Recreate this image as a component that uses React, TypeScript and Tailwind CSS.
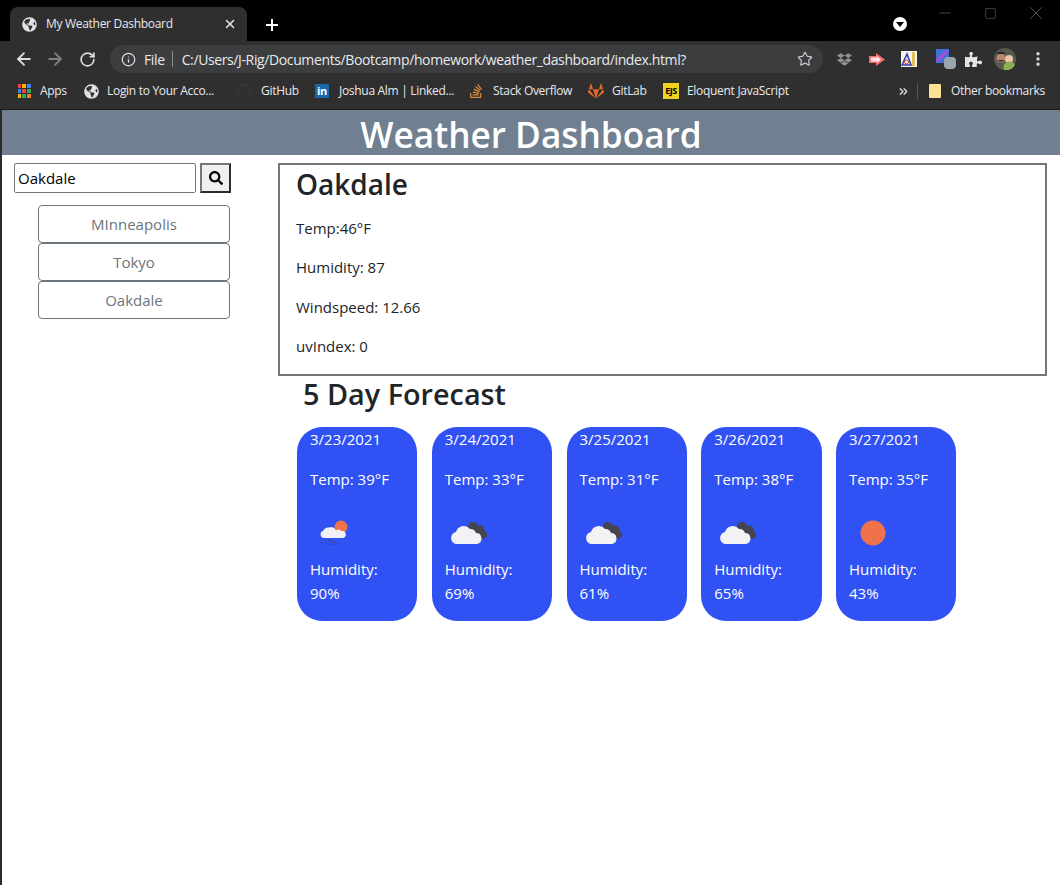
import { ArrowLeft, ArrowRight, ChevronsRight, Info, Minus, MoreVertical, RotateCw, Square, Star, X } from 'lucide-react';
import { FaDropbox, FaGithub, FaGitlab, FaGlobeAmericas, FaPuzzlePiece, FaSearch, FaStackOverflow } from 'react-icons/fa';

const HISTORY = ['MInneapolis', 'Tokyo', 'Oakdale'];

const FORECAST = [
  { date: '3/23/2021', temp: 39, icon: 'rain', humidity: 90 },
  { date: '3/24/2021', temp: 33, icon: 'clouds', humidity: 69 },
  { date: '3/25/2021', temp: 31, icon: 'clouds', humidity: 61 },
  { date: '3/26/2021', temp: 38, icon: 'clouds', humidity: 65 },
  { date: '3/27/2021', temp: 35, icon: 'sun', humidity: 43 },
];

const CURRENT = ['Temp:46°F', 'Humidity: 87', 'Windspeed: 12.66', 'uvIndex: 0'];

function WeatherIcon({ kind }: { kind: string }) {
  return (
    <svg width="50" height="50" viewBox="0 0 50 50">
      {kind === 'sun' && <circle cx="25" cy="25" r="12.5" fill="#f0724a" />}
      {kind === 'clouds' && (
        <g>
          <circle cx="29" cy="19" r="5" fill="#45454f" />
          <circle cx="36" cy="22" r="4.500" fill="#45454f" />
          <circle cx="39" cy="26.500" r="4" fill="#45454f" />
          <path d="M26 18h10v12H26z" fill="#45454f" />
          <path d="M13 36a6 6 0 0 1-1-11.900a8 8 0 0 1 14-3a6 6 0 0 1 6 4a5.500 5.500 0 0 1 1 10.900z" fill="#f2f2f4" />
        </g>
      )}
      {kind === 'rain' && (
        <g>
          <circle cx="32" cy="19" r="6.500" fill="#f0724a" />
          <path d="M15 30a3.600 3.600 0 0 1-1-7a6 6 0 0 1 6-3.500a5 5 0 0 1 7 3a3 3 0 0 1 5 .500h2a3.600 3.600 0 0 1 0 7z" fill="#f2f2f4" />
          <path d="M20 31l-.6 2M23 32.500l-.6 2M26 33l-.6 2M21 35.500l-.6 1.500M24.500 36l-.6 1.500" stroke="#333a55" strokeWidth="1" />
        </g>
      )}
    </svg>
  );
}

function Bookmark({ icon, label, className }: { icon: React.ReactNode; label: string; className: string }) {
  return (
    <div className={`flex items-center ${className}`}>
      <span className="flex w-4 h-4 items-center justify-center">{icon}</span>
      <span className="ml-2 whitespace-nowrap">{label}</span>
    </div>
  );
}

function AppsIcon() {
  const colors = ['#e8453c', '#f4b400', '#3d82f0', '#3d82f0', '#e8453c', '#34a853', '#f4b400', '#34a853', '#e8832a'];
  return (
    <span className="grid grid-cols-3 gap-px w-[13px] h-[14px]">
      {colors.map((c, i) => (
        <span key={i} style={{ backgroundColor: c }} />
      ))}
    </span>
  );
}

function BrowserChrome() {
  return (
    <div className="font-['Open_Sans',sans-serif] text-[#e8eaed]">
      {/* Tab strip */}
      <div className="h-[41px] bg-black flex items-end pl-[10px]">
        <div className="w-[237px] h-[34px] bg-[#2f2f2f] rounded-t-lg flex items-center pl-3 pr-[10px] text-xs tracking-[-0.3px]">
          <FaGlobeAmericas className="text-[15px] text-[#dfe1e5]" />
          <span className="ml-[9px] flex-1">My Weather Dashboard</span>
          <X size={14} strokeWidth={2.500} className="text-[#e8eaed]" />
        </div>
        <svg width="14" height="14" viewBox="0 0 14 14" className="ml-[18px] mb-[9px]">
          <path d="M7 1v12M1 7h12" stroke="#fff" strokeWidth="2" />
        </svg>
        <div className="ml-auto flex self-start h-full">
          <span className="mt-[17px] w-[14px] h-[14px] rounded-full bg-white flex items-center justify-center">
            <span className="w-0 h-0 border-l-[4px] border-r-[4px] border-t-[5px] border-l-transparent border-r-transparent border-t-black" />
          </span>
          <div className="flex mt-[5px] ml-[29px] mr-[13px] h-[16px] items-center text-[#5f6063]">
            <Minus size={18} strokeWidth={1} />
            <Square size={13} strokeWidth={1.200} className="ml-[30px]" />
            <X size={22} strokeWidth={0.900} className="ml-[28px]" />
          </div>
        </div>
      </div>

      {/* Address bar */}
      <div className="h-[36px] bg-[#2f2f2f] flex items-center pl-[14px]">
        <ArrowLeft size={20} strokeWidth={2.200} className="text-[#dadce0]" />
        <ArrowRight size={20} strokeWidth={2.200} className="ml-[11px] text-[#7d7f82]" />
        <RotateCw size={17} strokeWidth={2.400} className="ml-[14px] text-[#dadce0]" />
        <div className="ml-[14px] w-[713px] h-[28px] rounded-full bg-[#3c3d3f] flex items-center pl-[11px] pr-[10px] text-[14px] tracking-[-0.38px]">
          <Info size={15} className="text-[#dadce0]" />
          <span className="ml-2">File</span>
          <span className="ml-[7px] w-px h-[16px] bg-[#8a8b8d]" />
          <span className="ml-[9px] flex-1 whitespace-nowrap">C:/Users/J-Rig/Documents/Bootcamp/homework/weather_dashboard/index.html?</span>
          <Star size={16} strokeWidth={1.800} className="text-[#c4c6c9]" />
        </div>
        <FaDropbox className="ml-[14px] text-[15px] text-[#8f9194]" />
        <svg width="17" height="13" viewBox="0 0 17 13" className="ml-[17px]">
          <path d="M0 3h7V0l9 6.500-9 6.500v-3H0z" fill="#f26d6d" />
          <path d="M2 4.500h6V3l4 3.500-4 3.500V8.500H2z" fill="#fbe3e3" />
        </svg>
        <svg width="16" height="16" viewBox="0 0 16 16" className="ml-[15px]">
          <rect width="16" height="16" fill="#f5f5f0" />
          <path d="M11 1h3v14h-3z" fill="#e3c25c" />
          <path d="M6 3l4 11H1z" fill="none" stroke="#2b3aa8" strokeWidth="1.500" />
          <circle cx="5.500" cy="11" r="2" fill="none" stroke="#c23b3b" strokeWidth="1" />
        </svg>
        <span className="relative ml-[19px] w-[20px] h-[20px]">
          <svg width="13" height="14" viewBox="0 0 13 14" className="absolute left-0 top-0">
            <rect width="13" height="14" fill="#3f6fd8" />
            <path d="M1 12L11 2" stroke="#b04ad8" strokeWidth="3" />
          </svg>
          <span className="absolute right-0 bottom-0 w-[12px] h-[12px] rounded-sm bg-[#9aa5ad]" />
        </span>
        <FaPuzzlePiece className="ml-[9px] text-[17px] text-[#e4e5e7]" />
        <svg width="22" height="22" viewBox="0 0 22 22" className="ml-[12px]">
          <circle cx="11" cy="11" r="11" fill="#59594f" />
          <circle cx="7" cy="10" r="4.500" fill="#b8866a" />
          <path d="M2 6a6 5 0 0 1 10 0z" fill="#26262a" />
          <path d="M3.500 12a4 3.500 0 0 0 7 0z" fill="#3a3230" />
          <circle cx="15" cy="11" r="4" fill="#e8c8a8" />
          <path d="M10 22a6 6 0 0 1 11-5a11 11 0 0 1-6 5z" fill="#8cb052" />
        </svg>
        <MoreVertical size={18} strokeWidth={2.500} className="ml-[13px] text-[#dadce0]" />
      </div>

      {/* Bookmarks */}
      <div className="h-[33px] bg-[#2f2f2f] border-b border-[#1d1d1d] flex items-center pl-[16px] pr-[15px] pb-1 text-xs tracking-[-0.3px]">
        <Bookmark icon={<AppsIcon />} label="Apps" className="w-[67px]" />
        <Bookmark icon={<FaGlobeAmericas className="text-[15px] text-[#dfe1e5]" />} label="Login to Your Acco..." className="w-[153px]" />
        <Bookmark icon={<FaGithub className="text-[16px] text-[#333436]" />} label="GitHub" className="w-[78px] [&>span:last-child]:ml-[9px]" />
        <Bookmark
          icon={
            <span className="w-[14px] h-[14px] bg-[#1869ac] text-white text-[11px] font-bold leading-[14px] text-center">in</span>
          }
          label="Joshua Alm | Linked..."
          className="w-[154px] [&>span:last-child]:ml-[9px]"
        />
        <Bookmark icon={<FaStackOverflow className="text-[16px] text-[#d98a3d]" />} label="Stack Overflow" className="w-[120px] [&>span:last-child]:ml-[9px]" />
        <Bookmark icon={<FaGitlab className="text-[16px] text-[#e8682c]" />} label="GitLab" className="w-[75px]" />
        <Bookmark
          icon={
            <span className="w-[16px] h-[16px] bg-[#f0d21e] text-black text-[9px] font-bold leading-[16px] text-center tracking-[-0.5px]">EJS</span>
          }
          label="Eloquent JavaScript"
        />
        <ChevronsRight size={13} strokeWidth={2.500} className="ml-auto text-[#dadce0]" />
        <span className="ml-[7px] w-px h-[16px] bg-[#55565a]" />
        <span className="ml-[11px] w-[12px] h-[14px] bg-[#fde293] rounded-[1px]" />
        <span className="ml-[10px] whitespace-nowrap">Other bookmarks</span>
      </div>
    </div>
  );
}

export default function App() {
  return (
    <div className="min-h-[885px] bg-white border-l-2 border-[#2b2b2b] font-['Open_Sans',sans-serif] text-[#212529]">
      <div className="-ml-[2px]">
        <BrowserChrome />
      </div>

      <header className="h-[45px] bg-[#708090] text-center text-white">
        <h1 className="text-[35.200px] leading-[49px] font-semibold">Weather Dashboard</h1>
      </header>

      <div className="flex pt-2">
        {/* Search column */}
        <aside className="w-[276px] shrink-0 pl-3">
          <div className="flex">
            <input
              readOnly
              value="Oakdale"
              className="w-[182px] h-[30px] border border-[#767676] rounded-[2px] px-[3px] text-[15px] text-black outline-none"
            />
            <button className="ml-1 w-[31px] h-[30px] bg-[#efefef] border-2 border-[#2b2b2b] border-t-[#767676] border-l-[#767676] flex items-center justify-center">
              <FaSearch className="text-[14px] text-black" />
            </button>
          </div>
          <div className="mt-3 ml-6 w-[192px]">
            {HISTORY.map((city) => (
              <button
                key={city}
                className="block w-full h-[38px] border border-[#6c757d] rounded text-[15px] text-[#6c757d] bg-white"
              >
                {city}
              </button>
            ))}
          </div>
        </aside>

        <main className="w-[769px]">
          {/* Current conditions */}
          <section className="h-[213px] border-2 border-[#767676] pl-4">
            <h2 className="text-[28px] leading-[38px] font-semibold">Oakdale</h2>
            <div className="mt-[13px] text-[15px] leading-[24px]">
              {CURRENT.map((line) => (
                <p key={line} className="mb-[15.300px]">
                  {line}
                </p>
              ))}
            </div>
          </section>

          <h2 className="-mt-px ml-[25px] text-[28.800px] leading-[38px] font-semibold">5 Day Forecast</h2>

          {/* Forecast cards */}
          <div className="mt-[14px] ml-[19px] flex gap-[14.500px]">
            {FORECAST.map((day) => (
              <div key={day.date} className="w-[120.250px] h-[194px] rounded-[25px] bg-[#3052f5] pl-[13px] text-white text-[15px] leading-[24px]">
                <p>{day.date}</p>
                <p className="mt-4">Temp: {day.temp}°F</p>
                <div className="mt-[17px] -ml-px h-[46px]">
                  <WeatherIcon kind={day.icon} />
                </div>
                <p className="mt-[3px]">Humidity:</p>
                <p>{day.humidity}%</p>
              </div>
            ))}
          </div>
        </main>
      </div>
    </div>
  );
}
